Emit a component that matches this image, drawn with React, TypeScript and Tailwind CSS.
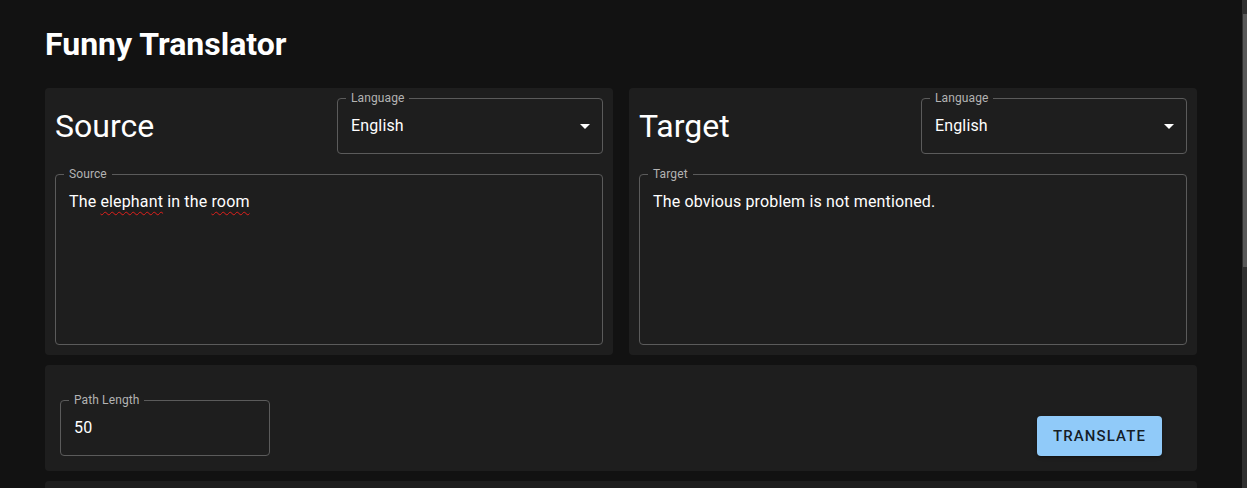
import { ReactNode } from "react";

function Outlined({
  label,
  className,
  children,
}: {
  label: string;
  className?: string;
  children: ReactNode;
}) {
  return (
    <div
      className={
        "relative rounded-[4px] border border-[#5b5b5b] " + (className ?? "")
      }
    >
      <span className="absolute left-[8px] top-[-1px] -translate-y-1/2 bg-[#1e1e1e] px-[5px] text-[12px] leading-none tracking-[0.11px] text-[#b3b3b3]">
        {label}
      </span>
      {children}
    </div>
  );
}

function LanguageSelect() {
  return (
    <Outlined label="Language" className="flex h-[56px] w-[266px] items-center pl-[13px] pr-[12px]">
      <span className="flex-1 text-[16px] tracking-[0.15px] text-white">English</span>
      <svg width="10" height="5" viewBox="0 0 10 5" className="mt-[1px]">
        <path d="M0 0 L5 5 L10 0 Z" fill="#ffffff" />
      </svg>
    </Outlined>
  );
}

function Panel({ title, text }: { title: string; text: ReactNode }) {
  return (
    <div className="rounded-[4px] bg-[#1e1e1e] p-[10px]">
      <div className="flex items-center justify-between">
        <h2 className="text-[32px] font-normal leading-none text-white">{title}</h2>
        <LanguageSelect />
      </div>
      <Outlined label={title} className="mt-[20px] h-[171px] px-[13px] pt-[15px]">
        <div className="text-[16px] leading-[23px] tracking-[0.15px] text-white">{text}</div>
      </Outlined>
    </div>
  );
}

const typo = "underline decoration-wavy decoration-[#e0201b] decoration-1 underline-offset-[4px]";

export default function App() {
  return (
    <div className="flex h-[488px] overflow-hidden bg-[#121212] font-['Roboto',sans-serif]">
      <div className="min-w-0 flex-1">
        <div className="mx-auto max-w-[1200px] px-6">
          <h1 className="pt-[25px] text-[32px] font-bold leading-[38px] text-white">
            Funny Translator
          </h1>
          <div className="mt-[25px] grid grid-cols-2 gap-4">
            <Panel
              title="Source"
              text={
                <>
                  The <span className={typo}>elephant</span> in the{" "}
                  <span className={typo}>room</span>
                </>
              }
            />
            <Panel title="Target" text="The obvious problem is not mentioned." />
          </div>
          <div className="mt-[10px] flex items-end justify-between rounded-[4px] bg-[#1e1e1e] pb-[15px] pl-[15px] pr-[35px] pt-[35px]">
            <Outlined label="Path Length" className="flex h-[56px] w-[210px] items-center px-[13px]">
              <span className="text-[16px] tracking-[0.15px] text-white">50</span>
            </Outlined>
            <button className="h-[40px] w-[125px] rounded-[4px] bg-[#90caf9] text-[15px] font-medium uppercase tracking-[1.1px] text-[#000000de] shadow-[0_3px_1px_-2px_rgba(0,0,0,0.2),0_2px_2px_0_rgba(0,0,0,0.14),0_1px_5px_0_rgba(0,0,0,0.12)]">
              Translate
            </button>
          </div>
          <div className="mt-[10px] h-[60px] rounded-[4px] bg-[#1e1e1e]" />
        </div>
      </div>
      <div className="w-[5px] bg-[#303030] pl-[1px] pt-[14px]">
        <div className="h-[253px] bg-[#585858]" />
      </div>
    </div>
  );
}
